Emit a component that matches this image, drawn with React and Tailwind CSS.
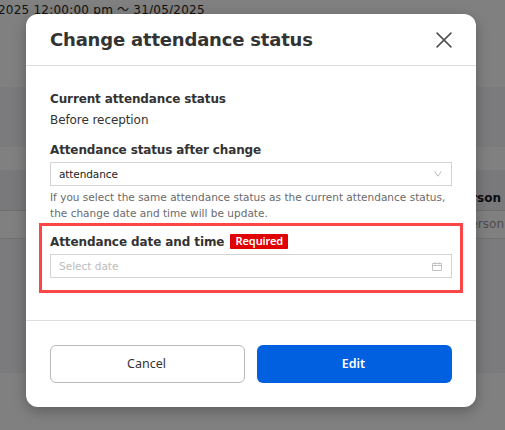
import React, { useState } from "react";

function CloseIcon() {
  return (
    <svg width="16" height="16" viewBox="0 0 16 16" fill="none" stroke="#505050" strokeWidth="1.5">
      <path d="M0.6 0.6 15.4 15.4M15.4 0.6 0.6 15.4" />
    </svg>
  );
}

function ChevronIcon() {
  return (
    <svg width="8" height="6" viewBox="0 0 8 6" fill="none" stroke="#b4b4b4" strokeWidth="0.9">
      <path d="M0.7 0.4 4 5.2 7.3 0.4" />
    </svg>
  );
}

function CalendarIcon() {
  return (
    <svg width="10" height="9" viewBox="0 0 10 9" fill="none" stroke="#c2c2c2" strokeWidth="1">
      <path d="M0.5 1.5h9v7h-9zM0.5 3.5h9M3 0v2.4M7 0v2.4" />
    </svg>
  );
}

// Page behind the dialog, already dimmed
function Backdrop() {
  return (
    <div className="flex h-full flex-col bg-[#808080]">
      <div className="h-[87px] text-[12px] leading-[21px] text-[#111] whitespace-pre">
        <span className="-ml-[2px] tracking-[0.23px]">2025 12:00:00 pm ～ 31/05/2025</span>
      </div>
      <div className="h-[60px] bg-[#7b7b7e]" />
      <div className="h-[23px]" />
      <div className="flex h-[41px] items-center justify-end border-b border-[#6e6e70] bg-[#79797c] pt-[15px] pr-[4px] text-[12px] font-bold text-[#0c0c10]">
        person
      </div>
      <div className="flex h-[28px] items-center justify-end border-b border-[#707072] pr-px pb-0.5 text-[12px] text-[#4c4c4c]">
        Person
      </div>
      <div className="h-[134px] bg-[#7b7b7e]" />
    </div>
  );
}

export default function App() {
  const [date, setDate] = useState("");

  return (
    <div className="relative h-[430px] w-[505px] overflow-hidden font-['DejaVu_Sans','Noto_Sans_CJK_JP',sans-serif]">
      <Backdrop />

      <div className="absolute top-[14px] left-[26px] flex h-[393px] w-[450px] flex-col rounded-[12px] bg-white text-[#333] shadow-[0_4px_14px_rgba(0,0,0,0.28)]">
        {/* Header */}
        <div className="flex h-[52px] shrink-0 items-center justify-between border-b border-[#dedede] pr-6 pl-6">
          <h2 className="text-[18px] leading-6 font-bold tracking-[-0.19px]">Change attendance status</h2>
          <button type="button" aria-label="Close">
            <CloseIcon />
          </button>
        </div>

        {/* Body */}
        <div className="flex h-[255px] shrink-0 flex-col border-b border-[#dedede] px-6 pt-[25px]">
          <p className="text-[12px] leading-4 font-bold tracking-[-0.13px]">Current attendance status</p>
          <p className="mt-[5px] text-[12px] leading-4 tracking-[-0.08px]">Before reception</p>

          <p className="mt-[14px] text-[12px] leading-4 font-bold tracking-[-0.13px]">
            Attendance status after change
          </p>
          <div className="mt-[4px] flex h-6 w-[402px] shrink-0 items-center justify-between border border-[#d4d4d4] pr-[9px] pl-2 text-[10.5px] tracking-[-0.1px] text-[#222]">
            <span className="pt-0.5">attendance</span>
            <ChevronIcon />
          </div>
          <p className="mt-[3px] text-[10.5px] leading-4 tracking-[0.015px] whitespace-nowrap text-[#6a6a6a]">
            If you select the same attendance status as the current attendance status,
            <br />
            the change date and time will be update.
          </p>

          {/* Highlighted field */}
          <div className="-mx-[11px] mt-[2px] h-[70px] w-[424px] shrink-0 border-3 border-[#fa4646] px-2 pt-[7px]">
            <div className="flex h-[16px] items-center gap-1.5 text-[12px] font-bold tracking-[-0.1px]">
              <span className="pt-0.5">Attendance date and time</span>
              <span className="flex h-[15px] w-[58px] items-center justify-center rounded-[1px] bg-[#e00000] font-['Noto_Sans',sans-serif] text-[11px] font-semibold text-white">
                Required
              </span>
            </div>
            <div className="mt-[5px] flex h-6 w-[402px] items-center justify-between border border-[#d4d4d4] pr-[9px] pl-2">
              <input
                type="text"
                value={date}
                onChange={(e) => setDate(e.target.value)}
                placeholder="Select date"
                className="w-40 pt-0.5 text-[10.5px] placeholder-[#bcbcbc] outline-none"
              />
              <CalendarIcon />
            </div>
          </div>
        </div>

        {/* Footer */}
        <div className="flex gap-3 px-6 pt-6 font-['Noto_Sans',sans-serif] text-[12.5px]">
          <button type="button" className="h-[38px] w-[195px] rounded-[6px] border border-[#b8b8b8] pr-0.5">
            Cancel
          </button>
          <button type="button" className="h-[38px] w-[195px] rounded-[6px] bg-[#0060df] pr-0.5 font-semibold text-white">
            Edit
          </button>
        </div>
      </div>
    </div>
  );
}
